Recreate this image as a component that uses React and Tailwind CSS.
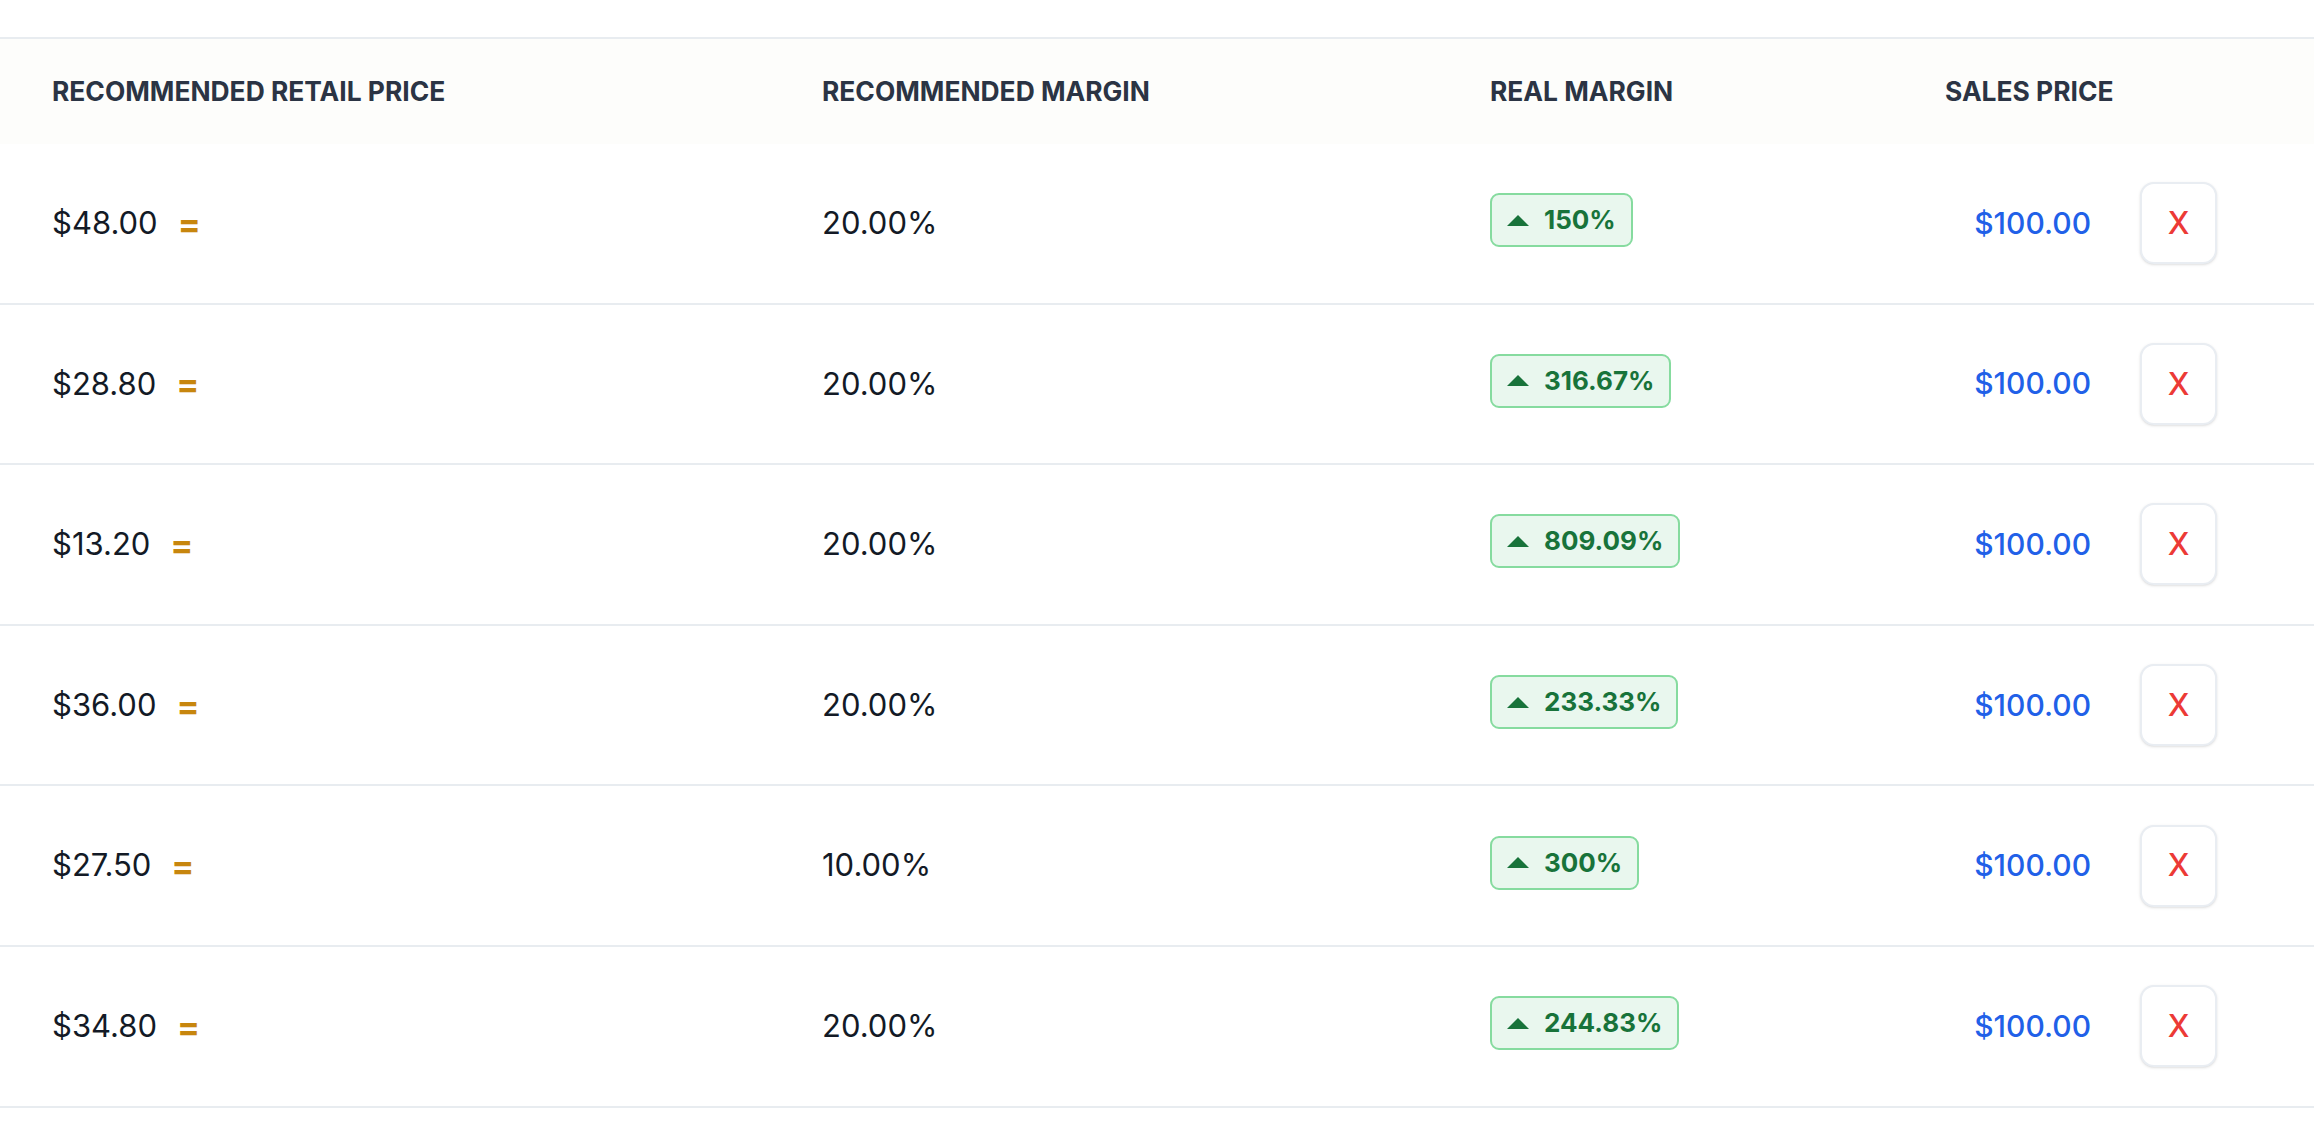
import React from 'react';

const rows = [
  { retail: '$48.00', margin: '20.00%', real: '150%', sales: '$100.00' },
  { retail: '$28.80', margin: '20.00%', real: '316.67%', sales: '$100.00' },
  { retail: '$13.20', margin: '20.00%', real: '809.09%', sales: '$100.00' },
  { retail: '$36.00', margin: '20.00%', real: '233.33%', sales: '$100.00' },
  { retail: '$27.50', margin: '10.00%', real: '300%', sales: '$100.00' },
  { retail: '$34.80', margin: '20.00%', real: '244.83%', sales: '$100.00' },
];

const cols = 'grid grid-cols-[770px_668px_455px_1fr] pl-[52px]';

const MarginBadge = ({ value }) => (
  <div className="mb-[6px] flex h-[54px] items-center rounded-[9px] border-2 border-[#86db9f] bg-[#e9f7ee] pl-[15px] pr-[15px]">
    <svg width="22" height="11" viewBox="0 0 22 11" className="shrink-0">
      <polygon points="0,11 11,0 22,11" fill="#18733a" />
    </svg>
    <span className="ml-[15px] text-[26px] font-bold leading-none text-[#18733a]">{value}</span>
  </div>
);

const App = () => {
  return (
    <div className="min-h-screen bg-white pt-[37px] font-['Inter',sans-serif]">
      {/* header */}
      <div className={`${cols} h-[107px] items-center border-t-2 border-[#e8ecf0] bg-[#fdfdfb] text-[26.4px] font-bold text-[#2b3444]`}>
        <div>RECOMMENDED RETAIL PRICE</div>
        <div>RECOMMENDED MARGIN</div>
        <div>REAL MARGIN</div>
        <div>SALES PRICE</div>
      </div>

      {rows.map((row, i) => (
        <div
          key={i}
          className={`${cols} h-[160.6px] items-center border-b-2 border-[#e8ecf0] text-[31px] text-[#131a26]`}
        >
          <div className="flex items-center">
            <span>{row.retail}</span>
            <span className="ml-[20px] text-[34px] font-bold text-[#c7860e]">=</span>
          </div>
          <div>{row.margin}</div>
          <div className="flex">
            <MarginBadge value={row.real} />
          </div>
          <div className="flex items-center">
            <span className="w-[146px] text-right text-[30px] font-medium text-[#2160e8]">{row.sales}</span>
            <button className="ml-[49px] flex h-[82px] w-[77px] items-center justify-center rounded-[14px] border-2 border-[#e9edf2] bg-white text-[31px] font-medium text-[#ec3a36] shadow-sm">
              X
            </button>
          </div>
        </div>
      ))}
    </div>
  );
};

export default App;
